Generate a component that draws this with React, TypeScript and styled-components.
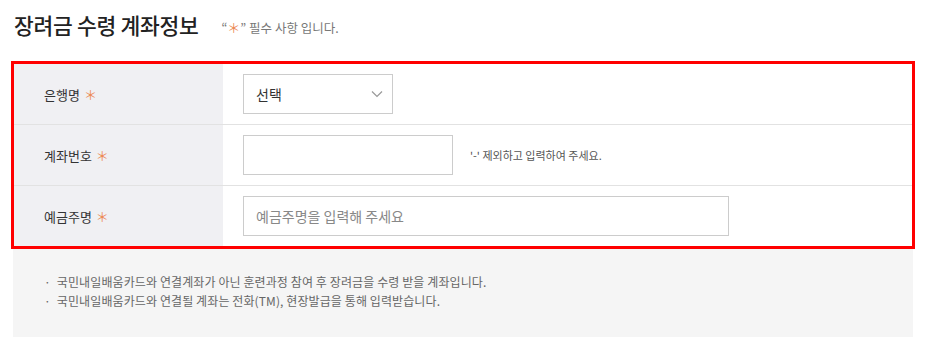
import styled, { createGlobalStyle } from "styled-components";

const GlobalStyle = createGlobalStyle`
  body {
    margin: 0;
    background: #fff;
    font-family: "Noto Sans CJK KR", "Noto Sans", sans-serif;
    color: #333;
  }
  * { box-sizing: border-box; }
`;

const Page = styled.div`
  width: 900px;
  margin-left: 13px;
`;

const Header = styled.div`
  height: 63px;
  display: flex;
  align-items: baseline;
  padding: 9px 0 0 1px;
`;

const Title = styled.h2`
  margin: 0;
  font-size: 21.5px;
  font-weight: 500;
  color: #222;
  letter-spacing: -0.3px;
`;

const Note = styled.span`
  margin-left: 23px;
  font-size: 12.5px;
  color: #777;
  position: relative;
  top: -1px;
`;

const Star = styled.span`
  color: #ec8a55;
  font-size: 13px;
`;

const Table = styled.div`
  border-top: 1px solid #e2e2e2;
  outline: 3px solid #ff0000;
  outline-offset: -1px;
`;

const Row = styled.div`
  display: grid;
  grid-template-columns: 210px 1fr;
  height: 61px;
  border-bottom: 1px solid #e2e2e2;
`;

const Label = styled.div`
  background: #f0f0f3;
  display: flex;
  align-items: center;
  padding-left: 31px;
  font-size: 13px;
  color: #333;
  gap: 4px;
`;

const LabelStar = styled.span`
  color: #ec8a55;
  font-size: 13px;
`;

const Field = styled.div`
  display: flex;
  align-items: center;
  padding-left: 20px;
  gap: 17px;
`;

const SelectBox = styled.div`
  width: 150px;
  height: 40px;
  border: 1px solid #ccc;
  display: flex;
  align-items: center;
  justify-content: space-between;
  padding: 0 9px 0 12px;
  font-size: 14px;
  color: #333;
`;

const Input = styled.input<{ $w: number }>`
  width: ${(p) => p.$w}px;
  height: 40px;
  border: 1px solid #ccc;
  padding: 0 12px;
  font-family: inherit;
  font-size: 14px;
  color: #333;
  outline: none;
  &::placeholder {
    color: #888;
  }
`;

const Hint = styled.span`
  font-size: 11px;
  color: #555;
`;

const Notes = styled.ul`
  margin: 0;
  list-style: none;
  background: #f5f5f5;
  height: 90px;
  padding: 25px 0 0 31px;
`;

const NoteItem = styled.li`
  font-size: 12px;
  line-height: 19px;
  color: #666;
  letter-spacing: 0.1px;
  &::before {
    content: "·";
    margin-right: 6px;
  }
`;

function Chevron() {
  return (
    <svg width="12" height="8" viewBox="0 0 12 8">
      <polyline points="1,1.5 6,6.5 11,1.5" fill="none" stroke="#999" strokeWidth="1.2" />
    </svg>
  );
}

export default function App() {
  return (
    <Page>
      <GlobalStyle />
      <Header>
        <Title>장려금 수령 계좌정보</Title>
        <Note>
          “<Star>＊</Star>” 필수 사항 입니다.
        </Note>
      </Header>
      <Table>
        <Row>
          <Label>
            은행명 <LabelStar>＊</LabelStar>
          </Label>
          <Field>
            <SelectBox>
              선택
              <Chevron />
            </SelectBox>
          </Field>
        </Row>
        <Row>
          <Label>
            계좌번호 <LabelStar>＊</LabelStar>
          </Label>
          <Field>
            <Input $w={210} />
            <Hint>'-' 제외하고 입력하여 주세요.</Hint>
          </Field>
        </Row>
        <Row>
          <Label>
            예금주명 <LabelStar>＊</LabelStar>
          </Label>
          <Field>
            <Input $w={486} placeholder="예금주명을 입력해 주세요" />
          </Field>
        </Row>
      </Table>
      <Notes>
        <NoteItem>국민내일배움카드와 연결계좌가 아닌 훈련과정 참여 후 장려금을 수령 받을 계좌입니다.</NoteItem>
        <NoteItem>국민내일배움카드와 연결될 계좌는 전화(TM), 현장발급을 통해 입력받습니다.</NoteItem>
      </Notes>
    </Page>
  );
}
